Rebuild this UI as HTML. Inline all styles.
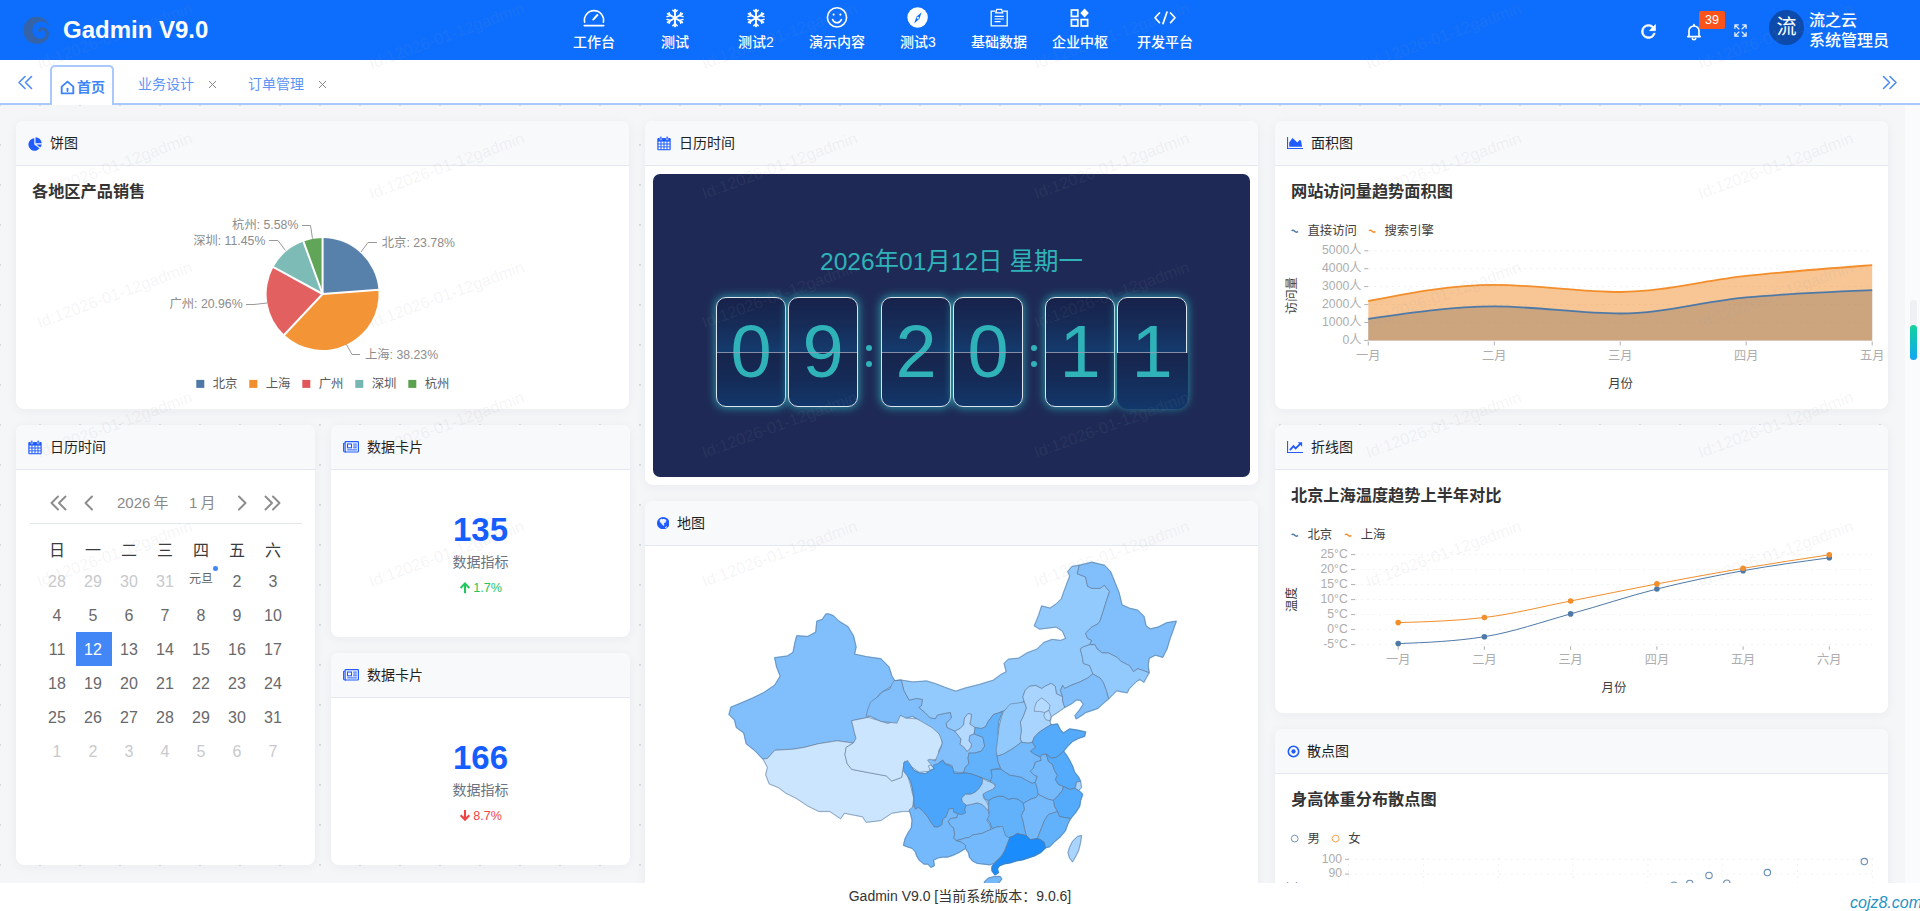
<!DOCTYPE html>
<html lang="zh-CN">
<head>
<meta charset="utf-8">
<title>Gadmin V9.0</title>
<style>
*{box-sizing:border-box;margin:0;padding:0}
html,body{width:1920px;height:911px;overflow:hidden}
body{font-family:"Liberation Sans","Noto Sans CJK SC",sans-serif;background:#f5f7fa;color:#303133;position:relative;font-size:14px}
.abs{position:absolute}
#hdr{position:absolute;left:0;top:0;width:1920px;height:60px;background:#0d6efd;color:#fff}
#logo{position:absolute;left:23px;top:17px;width:27px;height:27px}
#brand{position:absolute;left:63px;top:15px;font-size:24px;font-weight:700;line-height:30px;letter-spacing:0px;white-space:nowrap}
.nav{position:absolute;top:0;height:60px;text-align:center;font-size:14px;white-space:nowrap}
.nav svg{position:absolute;top:6px;left:50%;margin-left:-12px;width:24px;height:24px}
.nav span{position:absolute;top:32px;left:50%;transform:translateX(-50%);line-height:20px;font-weight:500}
#tabs{position:absolute;left:0;top:60px;width:1920px;height:45px;background:#fff;border-bottom:2px solid #a9c8fb}
.tab{position:absolute;top:0;height:44px;line-height:48px;font-size:14px;color:#5b95f7;white-space:nowrap}
#content{position:absolute;left:0;top:0;width:1905px;height:883px;background-color:#f5f6f8;background-image:radial-gradient(circle,#d9dce3 0.9px,rgba(217,220,227,0) 1.3px);background-size:40px 40px;background-position:20px 5px;overflow:hidden}
#rstrip{position:absolute;left:1905px;top:106px;width:15px;height:777px;background:#fafbfc}
.card{position:absolute;background:#fff;border-radius:8px;box-shadow:0 2px 12px rgba(20,30,50,.05);overflow:hidden}
.ch{position:absolute;left:0;top:0;right:0;height:45px;background:#f8f9fb;border-bottom:1px solid #e4e7ed;font-size:14px;color:#1f1f1f}
.ch svg{position:absolute;left:12px;top:15px;width:14px;height:14px}
.ch span{position:absolute;left:34px;top:12px;line-height:20px;white-space:nowrap}
.ct{position:absolute;left:16px;top:58.500px;font-size:16.200px;font-weight:700;color:#333;line-height:22px;white-space:nowrap}
#foot{position:absolute;left:0;top:883px;width:1920px;height:28px;background:#fff;text-align:center;font-size:14px;line-height:26px;color:#333}
svg text{font-family:"Liberation Sans","Noto Sans CJK SC",sans-serif}
#wmk{position:absolute;left:0;top:0;width:1920px;height:883px;overflow:hidden;pointer-events:none;z-index:50}
.wm{position:absolute;height:20px;line-height:20px;font-size:16.3px;color:rgba(150,150,162,.1);transform:rotate(-20.2deg);transform-origin:left bottom;white-space:nowrap}

.cc{width:36px;height:34px;line-height:34px;text-align:center;font-size:16px;white-space:nowrap}
.flip{position:absolute;width:70px;height:110px;border:1.400px solid #dfe5ec;border-radius:10px;background:linear-gradient(180deg,#17224a 0%,#162c58 25%,#143b6e 49.800%,#17244b 50%,#152b57 75%,#12376a 100%);box-shadow:0 0 9px 1px rgba(47,190,200,.7)}
.flip i{position:absolute;left:0;right:0;top:53.500px;height:1px;background:rgba(150,160,182,.85);z-index:3}
.flip b{position:absolute;left:0;right:0;top:0;height:108px;line-height:108px;text-align:center;font-size:74px;font-weight:400;color:#2fb3b8;font-family:"Liberation Sans",sans-serif;z-index:2}
.flip u{position:absolute;left:-1.400px;right:-2px;top:54.500px;bottom:-2.500px;background:linear-gradient(180deg,#17244b,#12376a);border-radius:0 0 11px 11px;z-index:1}
</style>
</head>
<body>
<div id="content">
<div class="card" style="left:16px;top:121px;width:613px;height:288px"><div class="ch"><svg viewBox="0 0 14 14" style="top:15.500px"><path fill="#1f5bff" d="M6.300 1.300A6.200 6.200 0 1 0 11.500 11.300L6.300 7.500z"/><path fill="#1f5bff" d="M7.500 0.200A6.300 6.300 0 0 1 13.700 6.300H7.500z"/><path fill="#1f5bff" d="M8.400 7.400h5.300a6.300 6.300 0 0 1-1.500 3.100z"/></svg><span style="left:34px">饼图</span></div><div class="ct">各地区产品销售</div><svg class="abs" style="left:0;top:0" width="613" height="288" viewBox="0 0 613 288"><path d="M306.6 173.0L306.60 117.00A56 56 0 0 1 362.44 168.71Z" fill="#4e79a7" fill-opacity="0.950"/><path d="M306.6 173.0L362.44 168.71A56 56 0 0 1 268.24 213.80Z" fill="#f28e2c" fill-opacity="0.950"/><path d="M306.6 173.0L268.24 213.80A56 56 0 0 1 257.48 146.11Z" fill="#e15759" fill-opacity="0.950"/><path d="M306.6 173.0L257.48 146.11A56 56 0 0 1 287.37 120.41Z" fill="#76b7b2" fill-opacity="0.950"/><path d="M306.6 173.0L287.37 120.41A56 56 0 0 1 306.60 117.00Z" fill="#59a14f" fill-opacity="0.950"/><path d="M306.6 173.0L306.60 116.44" stroke="#fff" stroke-width="2" stroke-linecap="round"/><path d="M306.6 173.0L362.99 168.67" stroke="#fff" stroke-width="2" stroke-linecap="round"/><path d="M306.6 173.0L267.86 214.21" stroke="#fff" stroke-width="2" stroke-linecap="round"/><path d="M306.6 173.0L256.98 145.85" stroke="#fff" stroke-width="2" stroke-linecap="round"/><path d="M306.6 173.0L287.17 119.88" stroke="#fff" stroke-width="2" stroke-linecap="round"/><g fill="none" stroke="#999" stroke-width="1"><path d="M345.0 131.0L352.0 121.5L361.0 121.5"/><path d="M330.5 223.5L336.0 233.5L344.0 233.5"/><path d="M251.0 182.0L238.0 183.5L230.0 183.5"/><path d="M269.5 129.5L262.0 119.5L253.0 119.5"/><path d="M296.5 117.5L294.5 104.5L286.0 104.5"/></g><g font-size="12.300" fill="#8c8c8c"><text x="365.8" y="125.99999999999999">北京: 23.78%</text><text x="349" y="237.60000000000002">上海: 38.23%</text><text x="226.6" y="187.3" text-anchor="end">广州: 20.96%</text><text x="249.39999999999998" y="123.60000000000001" text-anchor="end">深圳: 11.45%</text><text x="282.4" y="107.99999999999999" text-anchor="end">杭州: 5.58%</text></g><rect x="180.3" y="258.9" width="8" height="8" fill="#4e79a7"/><text x="196.7" y="267.2" font-size="12.400" fill="#595959">北京</text><rect x="233.3" y="258.9" width="8" height="8" fill="#f28e2c"/><text x="249.7" y="267.2" font-size="12.400" fill="#595959">上海</text><rect x="286.3" y="258.9" width="8" height="8" fill="#e15759"/><text x="302.7" y="267.2" font-size="12.400" fill="#595959">广州</text><rect x="339.3" y="258.9" width="8" height="8" fill="#76b7b2"/><text x="355.7" y="267.2" font-size="12.400" fill="#595959">深圳</text><rect x="392.3" y="258.9" width="8" height="8" fill="#59a14f"/><text x="408.7" y="267.2" font-size="12.400" fill="#595959">杭州</text></svg></div>
<div class="card" style="left:16px;top:425px;width:299px;height:440px"><div class="ch"><svg viewBox="0 0 14 14.500" style="top:15px;height:14.500px"><rect x="0.300" y="2" width="13.400" height="12.300" rx="1" fill="#1f5bff"/><rect x="2.900" y="0.200" width="1.900" height="3.700" rx="0.950" fill="#1f5bff" stroke="#f8f9fb" stroke-width="0.600"/><rect x="9.200" y="0.200" width="1.900" height="3.700" rx="0.950" fill="#1f5bff" stroke="#f8f9fb" stroke-width="0.600"/><g fill="#fff"><rect x="1.5" y="5.6" width="2" height="1.900"/><rect x="4.5" y="5.6" width="2" height="1.900"/><rect x="7.5" y="5.6" width="2" height="1.900"/><rect x="10.5" y="5.6" width="2" height="1.900"/><rect x="1.5" y="8.5" width="2" height="1.900"/><rect x="4.5" y="8.5" width="2" height="1.900"/><rect x="7.5" y="8.5" width="2" height="1.900"/><rect x="10.5" y="8.5" width="2" height="1.900"/><rect x="1.5" y="11.3" width="2" height="1.900"/><rect x="4.5" y="11.3" width="2" height="1.900"/><rect x="7.5" y="11.3" width="2" height="1.900"/><rect x="10.5" y="11.3" width="2" height="1.900"/></g></svg><span style="left:34px">日历时间</span></div><svg class="abs" style="left:34px;top:70px;width:18px;height:16px" viewBox="0 0 18 16" fill="none" stroke="#8c8c8c" stroke-width="1.900" stroke-linecap="round" stroke-linejoin="round"><path d="M8 1.500L1.500 8 8 14.500M15.500 1.500L9 8l6.500 6.500"/></svg><svg class="abs" style="left:68px;top:70px;width:10px;height:16px" viewBox="0 0 10 16" fill="none" stroke="#8c8c8c" stroke-width="1.900" stroke-linecap="round" stroke-linejoin="round"><path d="M8 1.500L1.500 8 8 14.500"/></svg><div class="abs" style="left:101px;top:66.800px;font-size:15px;line-height:22px;color:#8a8a8a;white-space:nowrap;word-spacing:-1px">2026 年</div><div class="abs" style="left:173px;top:66.800px;font-size:15px;line-height:22px;color:#8a8a8a;white-space:nowrap;word-spacing:-1px">1 月</div><svg class="abs" style="left:221px;top:70px;width:10px;height:16px" viewBox="0 0 10 16" fill="none" stroke="#8c8c8c" stroke-width="1.900" stroke-linecap="round" stroke-linejoin="round"><path d="M2 1.500L8.500 8 2 14.500"/></svg><svg class="abs" style="left:247px;top:70px;width:18px;height:16px" viewBox="0 0 18 16" fill="none" stroke="#8c8c8c" stroke-width="1.900" stroke-linecap="round" stroke-linejoin="round"><path d="M2.500 1.500L9 8l-6.500 6.500M10 1.500L16.500 8 10 14.500"/></svg><div class="abs" style="left:14px;top:97.500px;width:272px;height:1px;background:#e4e7ed"></div><div class="abs cc" style="left:23px;top:109px;color:#3c3c3e">日</div><div class="abs cc" style="left:59px;top:109px;color:#3c3c3e">一</div><div class="abs cc" style="left:95px;top:109px;color:#3c3c3e">二</div><div class="abs cc" style="left:131px;top:109px;color:#3c3c3e">三</div><div class="abs cc" style="left:167px;top:109px;color:#3c3c3e">四</div><div class="abs cc" style="left:203px;top:109px;color:#3c3c3e">五</div><div class="abs cc" style="left:239px;top:109px;color:#3c3c3e">六</div><div class="abs cc" style="left:23px;top:140.0px;color:#c8c9cd">28</div><div class="abs cc" style="left:59px;top:140.0px;color:#c8c9cd">29</div><div class="abs cc" style="left:95px;top:140.0px;color:#c8c9cd">30</div><div class="abs cc" style="left:131px;top:140.0px;color:#c8c9cd">31</div><div class="abs cc" style="left:167px;top:137.0px;color:#606266;font-size:12px">元旦</div><div class="abs" style="left:197.4px;top:141.0px;width:4.500px;height:4.500px;border-radius:50%;background:#4287f5"></div><div class="abs cc" style="left:203px;top:140.0px;color:#69696c">2</div><div class="abs cc" style="left:239px;top:140.0px;color:#69696c">3</div><div class="abs cc" style="left:23px;top:174.0px;color:#69696c">4</div><div class="abs cc" style="left:59px;top:174.0px;color:#69696c">5</div><div class="abs cc" style="left:95px;top:174.0px;color:#69696c">6</div><div class="abs cc" style="left:131px;top:174.0px;color:#69696c">7</div><div class="abs cc" style="left:167px;top:174.0px;color:#69696c">8</div><div class="abs cc" style="left:203px;top:174.0px;color:#69696c">9</div><div class="abs cc" style="left:239px;top:174.0px;color:#69696c">10</div><div class="abs cc" style="left:23px;top:208.1px;color:#69696c">11</div><div class="abs" style="left:60px;top:207.1px;width:36px;height:34px;background:#4287f5"></div><div class="abs cc" style="left:59px;top:208.1px;color:#fff">12</div><div class="abs cc" style="left:95px;top:208.1px;color:#69696c">13</div><div class="abs cc" style="left:131px;top:208.1px;color:#69696c">14</div><div class="abs cc" style="left:167px;top:208.1px;color:#69696c">15</div><div class="abs cc" style="left:203px;top:208.1px;color:#69696c">16</div><div class="abs cc" style="left:239px;top:208.1px;color:#69696c">17</div><div class="abs cc" style="left:23px;top:242.1px;color:#69696c">18</div><div class="abs cc" style="left:59px;top:242.1px;color:#69696c">19</div><div class="abs cc" style="left:95px;top:242.1px;color:#69696c">20</div><div class="abs cc" style="left:131px;top:242.1px;color:#69696c">21</div><div class="abs cc" style="left:167px;top:242.1px;color:#69696c">22</div><div class="abs cc" style="left:203px;top:242.1px;color:#69696c">23</div><div class="abs cc" style="left:239px;top:242.1px;color:#69696c">24</div><div class="abs cc" style="left:23px;top:276.2px;color:#69696c">25</div><div class="abs cc" style="left:59px;top:276.2px;color:#69696c">26</div><div class="abs cc" style="left:95px;top:276.2px;color:#69696c">27</div><div class="abs cc" style="left:131px;top:276.2px;color:#69696c">28</div><div class="abs cc" style="left:167px;top:276.2px;color:#69696c">29</div><div class="abs cc" style="left:203px;top:276.2px;color:#69696c">30</div><div class="abs cc" style="left:239px;top:276.2px;color:#69696c">31</div><div class="abs cc" style="left:23px;top:310.2px;color:#c8c9cd">1</div><div class="abs cc" style="left:59px;top:310.2px;color:#c8c9cd">2</div><div class="abs cc" style="left:95px;top:310.2px;color:#c8c9cd">3</div><div class="abs cc" style="left:131px;top:310.2px;color:#c8c9cd">4</div><div class="abs cc" style="left:167px;top:310.2px;color:#c8c9cd">5</div><div class="abs cc" style="left:203px;top:310.2px;color:#c8c9cd">6</div><div class="abs cc" style="left:239px;top:310.2px;color:#c8c9cd">7</div></div>
<div class="card" style="left:331px;top:425px;width:299px;height:212px"><div class="ch"><svg viewBox="0 0 16 12" style="width:16px;height:12px;top:16px" fill="none" stroke="#1f5bff"><rect x="2.100" y="0.600" width="13.300" height="10.400" rx="0.800" stroke-width="1.200"/><path d="M2.100 2.200H1.200a.6.600 0 0 0-.6.600v7a1.200 1.200 0 0 0 1.200 1.200H3" stroke-width="1.100"/><rect x="4.500" y="3" width="4" height="3.800" stroke-width="1.100"/><path stroke-width="1" d="M10.200 3.100h3.600M10.200 5h3.600M10.200 6.800h3.600M4.200 8.900h9.600"/></svg><span style="left:36px">数据卡片</span></div><div class="abs" style="left:0;width:299px;top:79.9px;text-align:center;font-size:33px;line-height:50px;font-weight:700;color:#165dff">135</div><div class="abs" style="left:0;width:299px;top:127.3px;text-align:center;font-size:14px;line-height:20px;color:#6b7280">数据指标</div><div class="abs" style="left:0;width:299px;top:152.5px;text-align:center;font-size:12.600px;line-height:20px;color:#22c55e"><svg viewBox="0 0 10 11" style="width:12px;height:13px;vertical-align:-2.500px;margin-right:2px"><path d="M5 0.800L0.700 5.200 1.900 6.500 4.100 4.300V10.300H5.900V4.300L8.100 6.500 9.300 5.200z" fill="#22c55e"/></svg>1.7%</div></div>
<div class="card" style="left:331px;top:653px;width:299px;height:212px"><div class="ch"><svg viewBox="0 0 16 12" style="width:16px;height:12px;top:16px" fill="none" stroke="#1f5bff"><rect x="2.100" y="0.600" width="13.300" height="10.400" rx="0.800" stroke-width="1.200"/><path d="M2.100 2.200H1.200a.6.600 0 0 0-.6.600v7a1.200 1.200 0 0 0 1.200 1.200H3" stroke-width="1.100"/><rect x="4.500" y="3" width="4" height="3.800" stroke-width="1.100"/><path stroke-width="1" d="M10.200 3.100h3.600M10.200 5h3.600M10.200 6.800h3.600M4.200 8.900h9.600"/></svg><span style="left:36px">数据卡片</span></div><div class="abs" style="left:0;width:299px;top:79.9px;text-align:center;font-size:33px;line-height:50px;font-weight:700;color:#165dff">166</div><div class="abs" style="left:0;width:299px;top:127.3px;text-align:center;font-size:14px;line-height:20px;color:#6b7280">数据指标</div><div class="abs" style="left:0;width:299px;top:152.5px;text-align:center;font-size:12.600px;line-height:20px;color:#ef4444"><svg viewBox="0 0 10 11" style="width:12px;height:13px;vertical-align:-2.500px;margin-right:2px"><path d="M5 10.300L0.700 5.900 1.900 4.600 4.100 6.800V0.800H5.900V6.800L8.100 4.600 9.300 5.900z" fill="#ef4444"/></svg>8.7%</div></div>
<div class="card" style="left:645px;top:121px;width:613px;height:364px"><div class="ch"><svg viewBox="0 0 14 14.500" style="top:15px;height:14.500px"><rect x="0.300" y="2" width="13.400" height="12.300" rx="1" fill="#1f5bff"/><rect x="2.900" y="0.200" width="1.900" height="3.700" rx="0.950" fill="#1f5bff" stroke="#f8f9fb" stroke-width="0.600"/><rect x="9.200" y="0.200" width="1.900" height="3.700" rx="0.950" fill="#1f5bff" stroke="#f8f9fb" stroke-width="0.600"/><g fill="#fff"><rect x="1.5" y="5.6" width="2" height="1.900"/><rect x="4.5" y="5.6" width="2" height="1.900"/><rect x="7.5" y="5.6" width="2" height="1.900"/><rect x="10.5" y="5.6" width="2" height="1.900"/><rect x="1.5" y="8.5" width="2" height="1.900"/><rect x="4.5" y="8.5" width="2" height="1.900"/><rect x="7.5" y="8.5" width="2" height="1.900"/><rect x="10.5" y="8.5" width="2" height="1.900"/><rect x="1.5" y="11.3" width="2" height="1.900"/><rect x="4.5" y="11.3" width="2" height="1.900"/><rect x="7.5" y="11.3" width="2" height="1.900"/><rect x="10.5" y="11.3" width="2" height="1.900"/></g></svg><span style="left:34px">日历时间</span></div><div class="abs" style="left:8px;top:53px;width:597px;height:303px;border-radius:7px;background:#1e2a55"></div><div class="abs" style="left:8px;width:597px;top:123.9px;text-align:center;font-size:24.500px;line-height:34px;color:#2fb3b8;white-space:nowrap">2026年01月12日 星期一</div><div class="flip" style="left:71px;top:176px"><i></i><b>0</b></div><div class="flip" style="left:143px;top:176px"><i></i><b>9</b></div><div class="flip" style="left:236px;top:176px"><i></i><b>2</b></div><div class="flip" style="left:308px;top:176px"><i></i><b>0</b></div><div class="flip" style="left:400px;top:176px"><i></i><b>1</b></div><div class="flip" style="left:472px;top:176px"><i></i><u></u><b>1</b></div><div class="abs" style="left:221.4px;top:224px;width:6px;height:6px;border-radius:50%;background:#2fb3b8"></div><div class="abs" style="left:221.4px;top:239.8px;width:6px;height:6px;border-radius:50%;background:#2fb3b8"></div><div class="abs" style="left:385.7px;top:224px;width:6px;height:6px;border-radius:50%;background:#2fb3b8"></div><div class="abs" style="left:385.7px;top:239.8px;width:6px;height:6px;border-radius:50%;background:#2fb3b8"></div></div>
<div class="card" style="left:645px;top:501px;width:613px;height:400px"><div class="ch"><svg viewBox="0 0 12 12" style="left:12px;top:16px;width:12.400px;height:12.400px"><circle cx="6" cy="6" r="6" fill="#1f5bff"/><path fill="#fff" d="M2.500 2.900L4.200 1.700 5.300 2.300 6.600 1.600 8.700 2.700 9.200 4.100 8.200 4.500 8.500 5.500 7.400 5.500 6.700 6.600 7.200 7.700 6.200 8.700 5.400 7.400 4.500 7.100 4 5.800 2.900 5.100zM7.600 9.900L9.200 9l.5.700L8.300 10.800z" fill-opacity=".92"/></svg><span style="left:32px">地图</span></div><svg class="abs" style="left:0;top:45px" width="613" height="340" viewBox="645 546 613 340"><g stroke="#65778f" stroke-width="0.600" stroke-linejoin="round"><path d="M926.7 758.3L936.4 760.1L935.5 769.2L928.8 770.3Z" fill="#cbe5ff" stroke="#cbe5ff" stroke-width="1.6"/>
<path d="M983.8 797.0L990.0 797.0L990.8 805.8L985.6 804.9Z" fill="#62b1fb" stroke="#62b1fb" stroke-width="1.6"/>
<path d="M894.2 680.7L901.3 680.2L912.7 682.0L926.7 681.1L935.5 683.7L944.3 687.2L955.7 691.3L965.4 688.1L979.4 684.6L993.5 680.2L1000.5 674.9L1006.3 671.8L1004.2 663.5L1008.3 659.3L1018.8 658.2L1027.1 653.0L1037.5 648.9L1043.8 642.6L1052.1 639.5L1060.5 640.5L1065.7 638.4L1062.6 631.1L1056.3 627.0L1048.0 628.0L1039.6 629.0L1034.4 625.9L1038.6 615.5L1041.7 606.1L1050.1 608.2L1056.3 604.0L1061.5 598.8L1063.6 592.5L1066.7 584.2L1069.9 575.9L1067.8 571.7L1072.0 566.5L1079.3 565.4L1077.2 573.8L1085.5 576.9L1087.6 586.3L1091.8 588.4L1100.1 588.4L1104.3 585.2L1109.5 591.5L1106.4 600.9L1103.2 611.3L1100.1 620.7L1098.0 623.8L1091.8 627.0L1085.5 633.2L1087.6 638.4L1091.8 640.5L1089.7 644.7L1083.4 646.8L1080.3 648.9L1082.4 657.2L1083.4 663.5L1089.7 665.5L1092.8 673.9L1087.6 678.1L1079.3 682.2L1070.9 685.4L1064.7 688.5L1062.6 685.4L1060.5 690.6L1062.6 696.8L1056.3 693.7L1055.3 686.4L1051.1 683.3L1044.8 686.4L1041.7 688.5L1035.5 685.4L1029.2 686.4L1025.0 690.6L1022.9 696.8L1024.0 701.0L1018.8 705.2L1010.4 707.3L1004.2 710.4L1000.0 712.5L1002.3 711.8L993.5 714.4L988.2 721.5L985.6 726.7L981.2 728.5L975.0 727.6L969.8 724.1L970.6 720.6L971.5 714.4L968.0 713.6L964.5 718.0L963.6 725.0L960.1 728.5L954.8 731.1L946.9 727.6L946.1 723.2L951.3 718.0L950.4 712.7L944.3 713.6L937.3 715.3L935.5 718.8L930.2 718.0L925.0 712.7L918.8 707.4L921.5 705.7L922.3 699.5L916.2 698.6L909.2 700.4L903.9 690.7L901.3 680.2Z" fill="#93cafd" stroke="#93cafd" stroke-width="1.6"/>
<path d="M1022.9 696.8L1025.0 690.6L1029.2 686.4L1035.5 685.4L1041.7 688.5L1044.8 686.4L1051.1 683.3L1055.3 686.4L1056.3 693.7L1062.6 696.8L1062.6 701.0L1064.7 707.3L1060.5 710.4L1054.2 714.6L1051.1 716.6L1050.1 721.9L1051.1 725.0L1050.4 725.1L1045.4 728.1L1039.3 732.1L1034.3 737.2L1032.3 742.2L1028.3 743.2L1021.3 742.2L1020.3 738.2L1021.3 730.1L1020.3 722.1L1023.3 716.1L1026.3 708.0L1024.3 702.0Z" fill="#a9d4fe" stroke="#a9d4fe" stroke-width="1.6"/>
<path d="M828.6 614.0L833.3 615.8L838.8 621.3L847.9 626.8L853.4 635.9L856.0 646.9L854.5 654.2L866.2 656.7L880.8 658.9L888.9 667.0L891.8 676.1L894.7 680.9L891.8 686.0L880.8 692.6L873.5 701.7L869.1 714.5L868.0 717.4L851.6 720.7L854.5 732.8L856.0 738.3L853.4 743.0L837.0 740.8L818.7 743.7L804.1 747.4L793.1 749.2L774.8 750.3L767.5 758.4L763.1 759.1L754.7 750.3L746.3 743.7L743.8 732.8L736.4 727.3L734.6 720.0L729.1 714.5L731.0 707.2L740.1 703.5L752.9 698.0L763.9 692.6L774.8 685.2L780.3 676.1L776.7 667.0L774.8 657.8L787.6 656.0L793.1 652.4L794.9 643.2L796.8 635.9L807.7 636.6L815.8 632.2L816.9 621.3L822.4 619.5L826.0 614.0Z" fill="#80bffc" stroke="#80bffc" stroke-width="1.6"/>
<path d="M763.1 759.1L767.5 758.4L774.8 750.3L793.1 749.2L804.1 747.4L818.7 743.7L837.0 740.8L853.4 743.0L846.1 747.4L845.0 754.7L847.2 763.8L851.6 769.3L866.2 772.2L886.3 775.9L891.8 781.0L901.7 777.4L902.8 769.3L904.6 765.7L910.1 783.9L913.7 798.6L912.6 807.7L910.1 811.4L902.8 811.4L891.8 813.2L880.8 820.5L866.2 822.3L862.6 816.8L844.3 813.2L840.6 818.7L829.7 811.4L818.7 811.4L807.7 805.9L796.8 798.6L785.8 793.1L778.5 787.6L769.3 783.9L765.7 774.8L767.5 767.5Z" fill="#cbe5ff" stroke="#cbe5ff" stroke-width="1.6"/>
<path d="M851.6 720.7L868.0 717.4L877.2 720.0L888.1 723.6L895.5 720.0L900.9 715.2L906.4 718.1L917.4 718.9L924.7 721.8L935.7 729.1L941.1 736.4L942.2 743.7L938.6 751.0L939.3 758.4L932.0 760.2L935.7 763.8L928.4 765.7L930.2 771.1L919.2 772.2L910.1 765.7L904.6 761.3L902.8 769.3L901.7 777.4L891.8 781.0L886.3 775.9L866.2 772.2L851.6 769.3L847.2 763.8L845.0 754.7L846.1 747.4L853.4 743.0L856.0 738.3L854.5 732.8Z" fill="#cbe5ff" stroke="#cbe5ff" stroke-width="1.6"/>
<path d="M894.2 680.7L901.3 680.2L903.9 690.7L909.2 700.4L916.2 698.6L922.3 699.5L921.5 705.7L918.8 707.4L925.0 712.7L930.2 718.0L935.5 718.8L937.3 715.3L944.3 713.6L950.4 712.7L951.3 718.0L946.1 723.2L946.9 727.6L954.8 731.1L958.3 735.5L961.0 739.0L960.1 744.3L963.6 746.9L967.1 751.3L970.6 747.8L971.5 744.3L968.9 740.8L969.8 735.5L974.2 733.8L982.9 737.3L984.7 746.1L981.2 751.3L974.2 753.1L968.9 753.1L968.0 758.3L968.9 763.6L965.4 767.1L963.6 772.4L958.3 772.4L953.1 771.5L952.2 765.4L946.1 763.6L942.5 760.1L939.0 762.7L937.3 767.1L933.8 768.0L930.2 763.6L927.6 760.1L930.2 759.2L935.5 761.0L937.3 755.7L940.8 747.8L942.5 742.5L939.0 733.8L932.0 727.6L921.5 721.5L912.7 716.2L905.7 718.0L900.4 715.3L896.9 723.2L889.9 722.3L881.1 721.5L870.5 716.2L866.1 716.2L867.9 709.2L870.5 702.1L877.6 696.9L882.8 691.6L889.9 689.0L892.5 682.8Z" fill="#80bffc" stroke="#80bffc" stroke-width="1.6"/>
<path d="M954.8 731.1L960.1 728.5L963.6 725.0L964.5 718.0L968.0 713.6L971.5 714.4L970.6 720.6L969.8 724.1L975.0 727.6L974.2 733.8L969.8 735.5L968.9 740.8L971.5 744.3L970.6 747.8L967.1 751.3L963.6 746.9L960.1 744.3L961.0 739.0L958.3 735.5Z" fill="#b5daff" stroke="#b5daff" stroke-width="1.6"/>
<path d="M1002.3 711.8L993.5 714.4L988.2 721.5L985.6 726.7L981.2 728.5L975.0 727.6L974.2 733.8L982.9 737.3L984.7 746.1L981.2 751.3L974.2 753.1L968.9 753.1L968.0 758.3L968.9 763.6L965.4 767.1L963.6 772.4L972.4 774.2L982.9 778.0L990.8 781.2L992.6 775.9L990.8 769.8L1000.5 768.0L998.7 763.6L997.0 755.7L997.9 747.8L998.7 739.0L997.9 730.2L998.7 721.5Z" fill="#62b1fb" stroke="#62b1fb" stroke-width="1.6"/>
<path d="M1079.3 565.4L1091.8 562.3L1104.3 565.4L1110.5 571.7L1114.7 582.1L1118.9 592.5L1122.0 605.1L1129.3 608.2L1137.7 610.3L1143.9 616.5L1146.0 625.9L1150.2 629.0L1158.5 627.0L1166.9 622.8L1176.2 621.3L1173.1 630.1L1170.0 638.4L1166.9 648.9L1162.7 657.2L1155.4 655.1L1149.1 658.2L1148.1 665.5L1149.1 672.8L1143.9 670.8L1137.7 668.7L1133.5 671.8L1129.3 665.5L1125.1 663.5L1121.0 661.4L1116.8 657.2L1108.5 653.0L1102.2 653.0L1097.0 648.9L1094.9 644.7L1089.7 644.7L1091.8 640.5L1087.6 638.4L1085.5 633.2L1091.8 627.0L1098.0 623.8L1100.1 620.7L1103.2 611.3L1106.4 600.9L1109.5 591.5L1104.3 585.2L1100.1 588.4L1091.8 588.4L1087.6 586.3L1085.5 576.9L1077.2 573.8Z" fill="#80bffc" stroke="#80bffc" stroke-width="1.6"/>
<path d="M1080.3 648.9L1083.4 646.8L1089.7 644.7L1094.9 644.7L1097.0 648.9L1102.2 653.0L1108.5 653.0L1116.8 657.2L1121.0 661.4L1125.1 663.5L1129.3 665.5L1133.5 671.8L1137.7 668.7L1143.9 670.8L1149.1 672.8L1146.0 678.1L1143.9 682.2L1139.7 679.1L1135.6 682.2L1129.3 688.5L1127.2 692.7L1121.0 691.6L1116.8 690.6L1112.6 694.7L1108.5 698.9L1106.4 690.6L1103.2 682.2L1100.1 678.1L1092.8 673.9L1089.7 665.5L1083.4 663.5L1082.4 657.2Z" fill="#93cafd" stroke="#93cafd" stroke-width="1.6"/>
<path d="M1092.8 673.9L1100.1 678.1L1103.2 682.2L1106.4 690.6L1108.5 698.9L1102.2 704.1L1098.0 708.3L1091.8 710.4L1085.5 712.5L1081.3 715.6L1076.1 718.7L1075.1 715.6L1079.3 710.4L1083.4 704.1L1080.3 700.0L1076.1 700.0L1070.9 704.1L1064.7 707.3L1062.6 701.0L1062.6 696.8L1060.5 690.6L1062.6 685.4L1064.7 688.5L1070.9 685.4L1079.3 682.2L1087.6 678.1Z" fill="#80bffc" stroke="#80bffc" stroke-width="1.6"/>
<path d="M1034.4 708.3L1036.5 702.0L1041.7 697.9L1045.9 701.0L1050.1 705.2L1049.0 710.4L1044.8 712.5L1039.6 711.4L1034.4 711.4Z" fill="#b5daff" stroke="#b5daff" stroke-width="1.6"/>
<path d="M1044.8 712.5L1049.0 710.4L1051.1 716.6L1050.1 720.8L1045.9 719.8L1043.8 715.6Z" fill="#b5daff" stroke="#b5daff" stroke-width="1.6"/>
<path d="M1024.3 702.0L1018.2 703.0L1010.2 704.0L1003.2 712.1L1001.2 718.1L999.2 726.1L998.2 734.1L997.2 742.2L996.2 750.2L997.2 756.2L1003.2 754.2L1010.2 750.2L1016.2 746.2L1021.3 742.2L1020.3 738.2L1021.3 730.1L1020.3 722.1L1023.3 716.1L1026.3 708.0Z" fill="#93cafd" stroke="#93cafd" stroke-width="1.6"/>
<path d="M1032.3 742.2L1034.3 737.2L1039.3 732.1L1045.4 728.1L1050.4 725.1L1057.4 724.1L1060.4 730.1L1063.4 733.1L1069.5 729.1L1076.5 730.1L1085.5 732.1L1084.5 736.2L1078.5 738.2L1072.5 741.2L1067.5 746.2L1063.4 751.2L1060.4 754.2L1056.4 757.2L1051.4 758.2L1046.4 754.2L1042.3 754.2L1040.3 757.2L1034.3 754.2L1030.3 751.2L1035.3 747.2Z" fill="#54aafb" stroke="#54aafb" stroke-width="1.6"/>
<path d="M997.2 756.2L1003.2 754.2L1010.2 750.2L1016.2 746.2L1021.3 742.2L1028.3 743.2L1032.3 742.2L1035.3 747.2L1030.3 751.2L1034.3 754.2L1040.3 757.2L1041.3 760.3L1035.3 762.3L1033.3 768.3L1030.3 771.3L1034.3 775.3L1037.3 776.3L1035.3 782.3L1032.3 783.4L1026.3 780.3L1021.3 777.3L1016.2 776.3L1010.2 775.3L1005.2 772.3L1001.2 769.3L998.2 762.3Z" fill="#74b9fc" stroke="#74b9fc" stroke-width="1.6"/>
<path d="M991.1 770.3L995.1 769.3L1001.2 769.3L1005.2 772.3L1010.2 775.3L1016.2 776.3L1021.3 777.3L1026.3 780.3L1032.3 783.4L1035.3 782.3L1037.3 788.4L1038.3 794.4L1036.3 797.4L1030.3 799.4L1023.3 803.4L1018.2 799.4L1013.2 798.4L1008.2 799.4L1003.2 796.4L998.2 796.4L992.1 798.4L989.1 800.4L985.1 799.4L983.1 794.4L986.1 791.4L994.1 788.4L995.1 784.4L990.1 782.3L992.1 776.3Z" fill="#62b1fb" stroke="#62b1fb" stroke-width="1.6"/>
<path d="M1041.3 760.3L1035.3 762.3L1033.3 768.3L1030.3 771.3L1034.3 775.3L1037.3 776.3L1035.3 782.3L1037.3 788.4L1038.3 794.4L1042.3 796.4L1048.4 799.4L1053.4 800.4L1058.4 795.4L1062.4 790.4L1063.4 786.4L1058.4 784.4L1055.4 779.3L1057.4 775.3L1054.4 770.3L1052.4 764.3L1048.4 761.3L1046.4 754.6L1042.3 754.6L1040.3 757.2Z" fill="#74b9fc" stroke="#74b9fc" stroke-width="1.6"/>
<path d="M1051.4 758.2L1056.4 757.2L1060.4 754.2L1063.4 751.2L1066.4 755.2L1069.5 760.3L1072.5 766.3L1074.5 772.3L1078.5 777.3L1080.5 781.3L1076.5 782.3L1074.5 788.4L1069.5 789.4L1063.4 786.4L1058.4 784.4L1055.4 779.3L1057.4 775.3L1054.4 770.3L1052.4 764.3L1048.4 761.3L1046.4 754.2Z" fill="#54aafb" stroke="#54aafb" stroke-width="1.6"/>
<path d="M1076.5 782.3L1080.5 781.3L1081.5 787.4L1078.5 790.4L1075.5 788.4Z" fill="#a9d4fe" stroke="#a9d4fe" stroke-width="1.6"/>
<path d="M1063.4 786.4L1069.5 789.4L1074.5 788.4L1078.5 790.4L1082.5 794.4L1080.5 800.4L1079.5 806.4L1075.5 812.5L1070.5 818.5L1064.4 817.5L1059.4 816.5L1057.4 811.5L1054.4 806.4L1053.4 800.4L1058.4 795.4L1062.4 790.4Z" fill="#54aafb" stroke="#54aafb" stroke-width="1.6"/>
<path d="M1038.3 794.4L1042.3 796.4L1048.4 799.4L1053.4 800.4L1054.4 806.4L1057.4 811.5L1054.4 812.5L1048.4 814.5L1044.4 820.5L1041.3 828.5L1039.3 833.6L1037.3 838.6L1030.3 839.6L1026.3 835.6L1024.3 828.5L1023.3 822.5L1021.3 815.5L1024.3 809.5L1023.3 803.4L1030.3 799.4L1036.3 797.4Z" fill="#74b9fc" stroke="#74b9fc" stroke-width="1.6"/>
<path d="M989.1 800.4L992.1 798.4L998.2 796.4L1003.2 796.4L1008.2 799.4L1013.2 798.4L1018.2 799.4L1023.3 803.4L1024.3 809.5L1021.3 815.5L1023.3 822.5L1024.3 828.5L1026.3 835.6L1022.3 834.6L1017.2 833.6L1012.2 836.6L1008.2 837.6L1004.2 834.6L1003.2 828.5L998.2 826.5L992.1 828.5L990.1 822.5L987.1 818.5L989.1 812.5L988.1 806.4Z" fill="#62b1fb" stroke="#62b1fb" stroke-width="1.6"/>
<path d="M1057.4 811.5L1059.4 816.5L1064.4 817.5L1070.5 818.5L1067.5 824.5L1065.4 830.5L1060.4 836.6L1054.4 841.6L1049.4 846.6L1045.4 847.6L1044.4 842.6L1040.3 839.6L1037.3 838.6L1039.3 833.6L1041.3 828.5L1044.4 820.5L1048.4 814.5L1054.4 812.5Z" fill="#62b1fb" stroke="#62b1fb" stroke-width="1.6"/>
<path d="M1008.2 837.6L1012.2 836.6L1017.2 833.6L1022.3 834.6L1026.3 835.6L1030.3 839.6L1037.3 838.6L1040.3 839.6L1044.4 842.6L1045.4 847.6L1040.3 852.6L1034.3 855.7L1028.3 857.7L1022.3 859.7L1016.2 860.7L1010.2 862.7L1004.2 863.7L999.2 865.7L997.2 868.7L998.2 872.7L995.1 874.7L992.1 870.7L992.1 866.7L995.1 862.7L1000.2 857.7L1004.2 851.6L1007.2 844.6Z" fill="#1a8cfb" stroke="#1a8cfb" stroke-width="1.6"/>
<path d="M1069.5 847.6L1072.5 841.6L1077.5 836.6L1081.5 835.6L1080.5 842.6L1078.5 850.6L1075.5 856.7L1072.5 861.7L1069.5 857.7L1068.1 852.6Z" fill="#a9d4fe" stroke="#a9d4fe" stroke-width="1.6"/>
<path d="M903.6 762.8L907.5 760.4L910.6 765.1L913.8 770.6L919.3 773.0L925.5 773.8L930.2 770.6L934.2 769.0L933.4 765.1L938.1 763.6L942.8 760.4L945.2 764.3L949.9 765.9L953.0 768.3L953.8 773.0L958.5 773.8L964.8 773.0L971.1 773.8L977.3 776.1L982.8 778.5L982.1 784.0L978.9 788.7L975.8 791.8L971.1 794.2L965.6 794.2L961.6 798.1L962.4 802.0L966.4 805.2L964.8 809.1L965.6 813.0L961.6 814.6L957.7 813.8L953.8 812.2L953.0 808.3L949.1 809.1L947.5 813.0L945.9 816.9L942.8 819.3L942.0 824.8L938.1 827.1L934.2 827.1L931.0 822.4L927.1 816.2L922.4 810.7L918.5 807.5L915.3 809.1L913.8 804.4L913.8 796.5L912.2 787.1L910.6 780.8L906.7 775.3L903.6 771.4Z" fill="#4aa5fb" stroke="#4aa5fb" stroke-width="1.6"/>
<path d="M913.8 804.4L915.3 809.1L918.5 807.5L922.4 810.7L927.1 816.2L931.0 822.4L934.2 827.1L938.1 827.1L942.0 824.8L942.8 819.3L945.9 816.9L947.5 813.0L949.1 809.1L953.0 808.3L953.8 812.2L957.7 813.8L956.9 817.7L950.7 818.5L948.3 821.6L950.7 825.6L953.8 827.9L954.6 834.2L953.8 838.1L956.2 840.5L961.6 842.1L965.6 845.2L965.6 848.3L961.6 850.7L957.7 853.0L952.2 855.4L947.5 857.0L942.8 857.0L938.1 857.8L933.4 860.1L934.2 865.6L931.0 867.2L927.9 864.0L924.0 864.0L919.3 860.1L916.9 856.2L915.3 851.5L912.2 848.3L907.5 846.8L903.6 845.2L905.1 838.9L908.3 832.6L911.4 827.9L912.2 820.1L910.6 813.8L909.0 809.9L912.2 807.5Z" fill="#74b9fc" stroke="#74b9fc" stroke-width="1.6"/>
<path d="M950.7 818.5L956.9 817.7L957.7 813.8L961.6 814.6L965.6 813.0L964.8 809.1L966.4 805.2L971.1 804.4L977.3 802.8L982.1 804.4L985.2 807.5L988.3 810.7L989.1 815.4L986.8 820.1L989.9 824.8L990.7 829.5L986.8 831.1L982.1 833.4L977.3 834.2L972.6 835.0L969.5 837.3L964.8 838.1L960.1 839.7L956.2 840.5L953.8 838.1L954.6 834.2L953.8 827.9L950.7 825.6L948.3 821.6Z" fill="#74b9fc" stroke="#74b9fc" stroke-width="1.6"/>
<path d="M982.8 778.5L986.8 780.8L993.0 783.2L995.4 786.3L992.3 789.5L986.8 791.8L982.8 794.2L983.6 798.1L986.8 802.0L988.3 805.9L988.3 810.7L985.2 807.5L982.1 804.4L977.3 802.8L971.1 804.4L966.4 805.2L962.4 802.0L961.6 798.1L965.6 794.2L971.1 794.2L975.8 791.8L978.9 788.7L982.1 784.0Z" fill="#a9d4fe" stroke="#a9d4fe" stroke-width="1.6"/>
<path d="M956.2 840.5L960.1 839.7L964.8 838.1L969.5 837.3L972.6 835.0L977.3 834.2L982.1 833.4L986.8 831.1L990.7 829.5L996.2 827.1L1002.5 826.4L1004.0 831.1L1005.6 835.8L1009.5 838.1L1007.2 843.6L1004.8 849.9L1001.7 855.4L997.8 859.3L993.8 863.3L989.9 864.8L983.6 864.0L977.3 863.3L972.6 860.9L969.5 857.0L968.7 853.0L965.6 848.3L965.6 845.2L961.6 842.1Z" fill="#74b9fc" stroke="#74b9fc" stroke-width="1.6"/>
<path d="M984.4 882.1L988.3 878.2L994.6 876.6L1000.1 876.6L1001.7 879.0L999.3 882.1L996.2 885.2L989.9 886.0L985.2 884.4Z" fill="#74b9fc" stroke="#74b9fc" stroke-width="1.6"/>
<path d="M894.2 680.7L901.3 680.2L912.7 682.0L926.7 681.1L935.5 683.7L944.3 687.2L955.7 691.3L965.4 688.1L979.4 684.6L993.5 680.2L1000.5 674.9L1006.3 671.8L1004.2 663.5L1008.3 659.3L1018.8 658.2L1027.1 653.0L1037.5 648.9L1043.8 642.6L1052.1 639.5L1060.5 640.5L1065.7 638.4L1062.6 631.1L1056.3 627.0L1048.0 628.0L1039.6 629.0L1034.4 625.9L1038.6 615.5L1041.7 606.1L1050.1 608.2L1056.3 604.0L1061.5 598.8L1063.6 592.5L1066.7 584.2L1069.9 575.9L1067.8 571.7L1072.0 566.5L1079.3 565.4L1077.2 573.8L1085.5 576.9L1087.6 586.3L1091.8 588.4L1100.1 588.4L1104.3 585.2L1109.5 591.5L1106.4 600.9L1103.2 611.3L1100.1 620.7L1098.0 623.8L1091.8 627.0L1085.5 633.2L1087.6 638.4L1091.8 640.5L1089.7 644.7L1083.4 646.8L1080.3 648.9L1082.4 657.2L1083.4 663.5L1089.7 665.5L1092.8 673.9L1087.6 678.1L1079.3 682.2L1070.9 685.4L1064.7 688.5L1062.6 685.4L1060.5 690.6L1062.6 696.8L1056.3 693.7L1055.3 686.4L1051.1 683.3L1044.8 686.4L1041.7 688.5L1035.5 685.4L1029.2 686.4L1025.0 690.6L1022.9 696.8L1024.0 701.0L1018.8 705.2L1010.4 707.3L1004.2 710.4L1000.0 712.5L1002.3 711.8L993.5 714.4L988.2 721.5L985.6 726.7L981.2 728.5L975.0 727.6L969.8 724.1L970.6 720.6L971.5 714.4L968.0 713.6L964.5 718.0L963.6 725.0L960.1 728.5L954.8 731.1L946.9 727.6L946.1 723.2L951.3 718.0L950.4 712.7L944.3 713.6L937.3 715.3L935.5 718.8L930.2 718.0L925.0 712.7L918.8 707.4L921.5 705.7L922.3 699.5L916.2 698.6L909.2 700.4L903.9 690.7L901.3 680.2Z" fill="#93cafd"/>
<path d="M1022.9 696.8L1025.0 690.6L1029.2 686.4L1035.5 685.4L1041.7 688.5L1044.8 686.4L1051.1 683.3L1055.3 686.4L1056.3 693.7L1062.6 696.8L1062.6 701.0L1064.7 707.3L1060.5 710.4L1054.2 714.6L1051.1 716.6L1050.1 721.9L1051.1 725.0L1050.4 725.1L1045.4 728.1L1039.3 732.1L1034.3 737.2L1032.3 742.2L1028.3 743.2L1021.3 742.2L1020.3 738.2L1021.3 730.1L1020.3 722.1L1023.3 716.1L1026.3 708.0L1024.3 702.0Z" fill="#a9d4fe"/>
<path d="M828.6 614.0L833.3 615.8L838.8 621.3L847.9 626.8L853.4 635.9L856.0 646.9L854.5 654.2L866.2 656.7L880.8 658.9L888.9 667.0L891.8 676.1L894.7 680.9L891.8 686.0L880.8 692.6L873.5 701.7L869.1 714.5L868.0 717.4L851.6 720.7L854.5 732.8L856.0 738.3L853.4 743.0L837.0 740.8L818.7 743.7L804.1 747.4L793.1 749.2L774.8 750.3L767.5 758.4L763.1 759.1L754.7 750.3L746.3 743.7L743.8 732.8L736.4 727.3L734.6 720.0L729.1 714.5L731.0 707.2L740.1 703.5L752.9 698.0L763.9 692.6L774.8 685.2L780.3 676.1L776.7 667.0L774.8 657.8L787.6 656.0L793.1 652.4L794.9 643.2L796.8 635.9L807.7 636.6L815.8 632.2L816.9 621.3L822.4 619.5L826.0 614.0Z" fill="#80bffc"/>
<path d="M763.1 759.1L767.5 758.4L774.8 750.3L793.1 749.2L804.1 747.4L818.7 743.7L837.0 740.8L853.4 743.0L846.1 747.4L845.0 754.7L847.2 763.8L851.6 769.3L866.2 772.2L886.3 775.9L891.8 781.0L901.7 777.4L902.8 769.3L904.6 765.7L910.1 783.9L913.7 798.6L912.6 807.7L910.1 811.4L902.8 811.4L891.8 813.2L880.8 820.5L866.2 822.3L862.6 816.8L844.3 813.2L840.6 818.7L829.7 811.4L818.7 811.4L807.7 805.9L796.8 798.6L785.8 793.1L778.5 787.6L769.3 783.9L765.7 774.8L767.5 767.5Z" fill="#cbe5ff"/>
<path d="M851.6 720.7L868.0 717.4L877.2 720.0L888.1 723.6L895.5 720.0L900.9 715.2L906.4 718.1L917.4 718.9L924.7 721.8L935.7 729.1L941.1 736.4L942.2 743.7L938.6 751.0L939.3 758.4L932.0 760.2L935.7 763.8L928.4 765.7L930.2 771.1L919.2 772.2L910.1 765.7L904.6 761.3L902.8 769.3L901.7 777.4L891.8 781.0L886.3 775.9L866.2 772.2L851.6 769.3L847.2 763.8L845.0 754.7L846.1 747.4L853.4 743.0L856.0 738.3L854.5 732.8Z" fill="#cbe5ff"/>
<path d="M894.2 680.7L901.3 680.2L903.9 690.7L909.2 700.4L916.2 698.6L922.3 699.5L921.5 705.7L918.8 707.4L925.0 712.7L930.2 718.0L935.5 718.8L937.3 715.3L944.3 713.6L950.4 712.7L951.3 718.0L946.1 723.2L946.9 727.6L954.8 731.1L958.3 735.5L961.0 739.0L960.1 744.3L963.6 746.9L967.1 751.3L970.6 747.8L971.5 744.3L968.9 740.8L969.8 735.5L974.2 733.8L982.9 737.3L984.7 746.1L981.2 751.3L974.2 753.1L968.9 753.1L968.0 758.3L968.9 763.6L965.4 767.1L963.6 772.4L958.3 772.4L953.1 771.5L952.2 765.4L946.1 763.6L942.5 760.1L939.0 762.7L937.3 767.1L933.8 768.0L930.2 763.6L927.6 760.1L930.2 759.2L935.5 761.0L937.3 755.7L940.8 747.8L942.5 742.5L939.0 733.8L932.0 727.6L921.5 721.5L912.7 716.2L905.7 718.0L900.4 715.3L896.9 723.2L889.9 722.3L881.1 721.5L870.5 716.2L866.1 716.2L867.9 709.2L870.5 702.1L877.6 696.9L882.8 691.6L889.9 689.0L892.5 682.8Z" fill="#80bffc"/>
<path d="M954.8 731.1L960.1 728.5L963.6 725.0L964.5 718.0L968.0 713.6L971.5 714.4L970.6 720.6L969.8 724.1L975.0 727.6L974.2 733.8L969.8 735.5L968.9 740.8L971.5 744.3L970.6 747.8L967.1 751.3L963.6 746.9L960.1 744.3L961.0 739.0L958.3 735.5Z" fill="#b5daff"/>
<path d="M1002.3 711.8L993.5 714.4L988.2 721.5L985.6 726.7L981.2 728.5L975.0 727.6L974.2 733.8L982.9 737.3L984.7 746.1L981.2 751.3L974.2 753.1L968.9 753.1L968.0 758.3L968.9 763.6L965.4 767.1L963.6 772.4L972.4 774.2L982.9 778.0L990.8 781.2L992.6 775.9L990.8 769.8L1000.5 768.0L998.7 763.6L997.0 755.7L997.9 747.8L998.7 739.0L997.9 730.2L998.7 721.5Z" fill="#62b1fb"/>
<path d="M1079.3 565.4L1091.8 562.3L1104.3 565.4L1110.5 571.7L1114.7 582.1L1118.9 592.5L1122.0 605.1L1129.3 608.2L1137.7 610.3L1143.9 616.5L1146.0 625.9L1150.2 629.0L1158.5 627.0L1166.9 622.8L1176.2 621.3L1173.1 630.1L1170.0 638.4L1166.9 648.9L1162.7 657.2L1155.4 655.1L1149.1 658.2L1148.1 665.5L1149.1 672.8L1143.9 670.8L1137.7 668.7L1133.5 671.8L1129.3 665.5L1125.1 663.5L1121.0 661.4L1116.8 657.2L1108.5 653.0L1102.2 653.0L1097.0 648.9L1094.9 644.7L1089.7 644.7L1091.8 640.5L1087.6 638.4L1085.5 633.2L1091.8 627.0L1098.0 623.8L1100.1 620.7L1103.2 611.3L1106.4 600.9L1109.5 591.5L1104.3 585.2L1100.1 588.4L1091.8 588.4L1087.6 586.3L1085.5 576.9L1077.2 573.8Z" fill="#80bffc"/>
<path d="M1080.3 648.9L1083.4 646.8L1089.7 644.7L1094.9 644.7L1097.0 648.9L1102.2 653.0L1108.5 653.0L1116.8 657.2L1121.0 661.4L1125.1 663.5L1129.3 665.5L1133.5 671.8L1137.7 668.7L1143.9 670.8L1149.1 672.8L1146.0 678.1L1143.9 682.2L1139.7 679.1L1135.6 682.2L1129.3 688.5L1127.2 692.7L1121.0 691.6L1116.8 690.6L1112.6 694.7L1108.5 698.9L1106.4 690.6L1103.2 682.2L1100.1 678.1L1092.8 673.9L1089.7 665.5L1083.4 663.5L1082.4 657.2Z" fill="#93cafd"/>
<path d="M1092.8 673.9L1100.1 678.1L1103.2 682.2L1106.4 690.6L1108.5 698.9L1102.2 704.1L1098.0 708.3L1091.8 710.4L1085.5 712.5L1081.3 715.6L1076.1 718.7L1075.1 715.6L1079.3 710.4L1083.4 704.1L1080.3 700.0L1076.1 700.0L1070.9 704.1L1064.7 707.3L1062.6 701.0L1062.6 696.8L1060.5 690.6L1062.6 685.4L1064.7 688.5L1070.9 685.4L1079.3 682.2L1087.6 678.1Z" fill="#80bffc"/>
<path d="M1034.4 708.3L1036.5 702.0L1041.7 697.9L1045.9 701.0L1050.1 705.2L1049.0 710.4L1044.8 712.5L1039.6 711.4L1034.4 711.4Z" fill="#b5daff"/>
<path d="M1044.8 712.5L1049.0 710.4L1051.1 716.6L1050.1 720.8L1045.9 719.8L1043.8 715.6Z" fill="#b5daff"/>
<path d="M1024.3 702.0L1018.2 703.0L1010.2 704.0L1003.2 712.1L1001.2 718.1L999.2 726.1L998.2 734.1L997.2 742.2L996.2 750.2L997.2 756.2L1003.2 754.2L1010.2 750.2L1016.2 746.2L1021.3 742.2L1020.3 738.2L1021.3 730.1L1020.3 722.1L1023.3 716.1L1026.3 708.0Z" fill="#93cafd"/>
<path d="M1032.3 742.2L1034.3 737.2L1039.3 732.1L1045.4 728.1L1050.4 725.1L1057.4 724.1L1060.4 730.1L1063.4 733.1L1069.5 729.1L1076.5 730.1L1085.5 732.1L1084.5 736.2L1078.5 738.2L1072.5 741.2L1067.5 746.2L1063.4 751.2L1060.4 754.2L1056.4 757.2L1051.4 758.2L1046.4 754.2L1042.3 754.2L1040.3 757.2L1034.3 754.2L1030.3 751.2L1035.3 747.2Z" fill="#54aafb"/>
<path d="M997.2 756.2L1003.2 754.2L1010.2 750.2L1016.2 746.2L1021.3 742.2L1028.3 743.2L1032.3 742.2L1035.3 747.2L1030.3 751.2L1034.3 754.2L1040.3 757.2L1041.3 760.3L1035.3 762.3L1033.3 768.3L1030.3 771.3L1034.3 775.3L1037.3 776.3L1035.3 782.3L1032.3 783.4L1026.3 780.3L1021.3 777.3L1016.2 776.3L1010.2 775.3L1005.2 772.3L1001.2 769.3L998.2 762.3Z" fill="#74b9fc"/>
<path d="M991.1 770.3L995.1 769.3L1001.2 769.3L1005.2 772.3L1010.2 775.3L1016.2 776.3L1021.3 777.3L1026.3 780.3L1032.3 783.4L1035.3 782.3L1037.3 788.4L1038.3 794.4L1036.3 797.4L1030.3 799.4L1023.3 803.4L1018.2 799.4L1013.2 798.4L1008.2 799.4L1003.2 796.4L998.2 796.4L992.1 798.4L989.1 800.4L985.1 799.4L983.1 794.4L986.1 791.4L994.1 788.4L995.1 784.4L990.1 782.3L992.1 776.3Z" fill="#62b1fb"/>
<path d="M1041.3 760.3L1035.3 762.3L1033.3 768.3L1030.3 771.3L1034.3 775.3L1037.3 776.3L1035.3 782.3L1037.3 788.4L1038.3 794.4L1042.3 796.4L1048.4 799.4L1053.4 800.4L1058.4 795.4L1062.4 790.4L1063.4 786.4L1058.4 784.4L1055.4 779.3L1057.4 775.3L1054.4 770.3L1052.4 764.3L1048.4 761.3L1046.4 754.6L1042.3 754.6L1040.3 757.2Z" fill="#74b9fc"/>
<path d="M1051.4 758.2L1056.4 757.2L1060.4 754.2L1063.4 751.2L1066.4 755.2L1069.5 760.3L1072.5 766.3L1074.5 772.3L1078.5 777.3L1080.5 781.3L1076.5 782.3L1074.5 788.4L1069.5 789.4L1063.4 786.4L1058.4 784.4L1055.4 779.3L1057.4 775.3L1054.4 770.3L1052.4 764.3L1048.4 761.3L1046.4 754.2Z" fill="#54aafb"/>
<path d="M1076.5 782.3L1080.5 781.3L1081.5 787.4L1078.5 790.4L1075.5 788.4Z" fill="#a9d4fe"/>
<path d="M1063.4 786.4L1069.5 789.4L1074.5 788.4L1078.5 790.4L1082.5 794.4L1080.5 800.4L1079.5 806.4L1075.5 812.5L1070.5 818.5L1064.4 817.5L1059.4 816.5L1057.4 811.5L1054.4 806.4L1053.4 800.4L1058.4 795.4L1062.4 790.4Z" fill="#54aafb"/>
<path d="M1038.3 794.4L1042.3 796.4L1048.4 799.4L1053.4 800.4L1054.4 806.4L1057.4 811.5L1054.4 812.5L1048.4 814.5L1044.4 820.5L1041.3 828.5L1039.3 833.6L1037.3 838.6L1030.3 839.6L1026.3 835.6L1024.3 828.5L1023.3 822.5L1021.3 815.5L1024.3 809.5L1023.3 803.4L1030.3 799.4L1036.3 797.4Z" fill="#74b9fc"/>
<path d="M989.1 800.4L992.1 798.4L998.2 796.4L1003.2 796.4L1008.2 799.4L1013.2 798.4L1018.2 799.4L1023.3 803.4L1024.3 809.5L1021.3 815.5L1023.3 822.5L1024.3 828.5L1026.3 835.6L1022.3 834.6L1017.2 833.6L1012.2 836.6L1008.2 837.6L1004.2 834.6L1003.2 828.5L998.2 826.5L992.1 828.5L990.1 822.5L987.1 818.5L989.1 812.5L988.1 806.4Z" fill="#62b1fb"/>
<path d="M1057.4 811.5L1059.4 816.5L1064.4 817.5L1070.5 818.5L1067.5 824.5L1065.4 830.5L1060.4 836.6L1054.4 841.6L1049.4 846.6L1045.4 847.6L1044.4 842.6L1040.3 839.6L1037.3 838.6L1039.3 833.6L1041.3 828.5L1044.4 820.5L1048.4 814.5L1054.4 812.5Z" fill="#62b1fb"/>
<path d="M1008.2 837.6L1012.2 836.6L1017.2 833.6L1022.3 834.6L1026.3 835.6L1030.3 839.6L1037.3 838.6L1040.3 839.6L1044.4 842.6L1045.4 847.6L1040.3 852.6L1034.3 855.7L1028.3 857.7L1022.3 859.7L1016.2 860.7L1010.2 862.7L1004.2 863.7L999.2 865.7L997.2 868.7L998.2 872.7L995.1 874.7L992.1 870.7L992.1 866.7L995.1 862.7L1000.2 857.7L1004.2 851.6L1007.2 844.6Z" fill="#1a8cfb"/>
<path d="M1069.5 847.6L1072.5 841.6L1077.5 836.6L1081.5 835.6L1080.5 842.6L1078.5 850.6L1075.5 856.7L1072.5 861.7L1069.5 857.7L1068.1 852.6Z" fill="#a9d4fe"/>
<path d="M903.6 762.8L907.5 760.4L910.6 765.1L913.8 770.6L919.3 773.0L925.5 773.8L930.2 770.6L934.2 769.0L933.4 765.1L938.1 763.6L942.8 760.4L945.2 764.3L949.9 765.9L953.0 768.3L953.8 773.0L958.5 773.8L964.8 773.0L971.1 773.8L977.3 776.1L982.8 778.5L982.1 784.0L978.9 788.7L975.8 791.8L971.1 794.2L965.6 794.2L961.6 798.1L962.4 802.0L966.4 805.2L964.8 809.1L965.6 813.0L961.6 814.6L957.7 813.8L953.8 812.2L953.0 808.3L949.1 809.1L947.5 813.0L945.9 816.9L942.8 819.3L942.0 824.8L938.1 827.1L934.2 827.1L931.0 822.4L927.1 816.2L922.4 810.7L918.5 807.5L915.3 809.1L913.8 804.4L913.8 796.5L912.2 787.1L910.6 780.8L906.7 775.3L903.6 771.4Z" fill="#4aa5fb"/>
<path d="M913.8 804.4L915.3 809.1L918.5 807.5L922.4 810.7L927.1 816.2L931.0 822.4L934.2 827.1L938.1 827.1L942.0 824.8L942.8 819.3L945.9 816.9L947.5 813.0L949.1 809.1L953.0 808.3L953.8 812.2L957.7 813.8L956.9 817.7L950.7 818.5L948.3 821.6L950.7 825.6L953.8 827.9L954.6 834.2L953.8 838.1L956.2 840.5L961.6 842.1L965.6 845.2L965.6 848.3L961.6 850.7L957.7 853.0L952.2 855.4L947.5 857.0L942.8 857.0L938.1 857.8L933.4 860.1L934.2 865.6L931.0 867.2L927.9 864.0L924.0 864.0L919.3 860.1L916.9 856.2L915.3 851.5L912.2 848.3L907.5 846.8L903.6 845.2L905.1 838.9L908.3 832.6L911.4 827.9L912.2 820.1L910.6 813.8L909.0 809.9L912.2 807.5Z" fill="#74b9fc"/>
<path d="M950.7 818.5L956.9 817.7L957.7 813.8L961.6 814.6L965.6 813.0L964.8 809.1L966.4 805.2L971.1 804.4L977.3 802.8L982.1 804.4L985.2 807.5L988.3 810.7L989.1 815.4L986.8 820.1L989.9 824.8L990.7 829.5L986.8 831.1L982.1 833.4L977.3 834.2L972.6 835.0L969.5 837.3L964.8 838.1L960.1 839.7L956.2 840.5L953.8 838.1L954.6 834.2L953.8 827.9L950.7 825.6L948.3 821.6Z" fill="#74b9fc"/>
<path d="M982.8 778.5L986.8 780.8L993.0 783.2L995.4 786.3L992.3 789.5L986.8 791.8L982.8 794.2L983.6 798.1L986.8 802.0L988.3 805.9L988.3 810.7L985.2 807.5L982.1 804.4L977.3 802.8L971.1 804.4L966.4 805.2L962.4 802.0L961.6 798.1L965.6 794.2L971.1 794.2L975.8 791.8L978.9 788.7L982.1 784.0Z" fill="#a9d4fe"/>
<path d="M956.2 840.5L960.1 839.7L964.8 838.1L969.5 837.3L972.6 835.0L977.3 834.2L982.1 833.4L986.8 831.1L990.7 829.5L996.2 827.1L1002.5 826.4L1004.0 831.1L1005.6 835.8L1009.5 838.1L1007.2 843.6L1004.8 849.9L1001.7 855.4L997.8 859.3L993.8 863.3L989.9 864.8L983.6 864.0L977.3 863.3L972.6 860.9L969.5 857.0L968.7 853.0L965.6 848.3L965.6 845.2L961.6 842.1Z" fill="#74b9fc"/>
<path d="M984.4 882.1L988.3 878.2L994.6 876.6L1000.1 876.6L1001.7 879.0L999.3 882.1L996.2 885.2L989.9 886.0L985.2 884.4Z" fill="#74b9fc"/></g></svg></div>
<div class="card" style="left:1275px;top:121px;width:613px;height:288px"><div class="ch"><svg viewBox="0 0 16 12" style="width:16px;height:12px;top:16px"><path fill="none" stroke="#1f5bff" stroke-width="1.100" d="M0.550 0v11.450H16"/><path fill="#1f5bff" d="M2.200 9.700V5.500L5.500 1l4.900 4.500 2.100-2.400 1.500.5 1.100 6.100z"/></svg><span style="left:36px">面积图</span></div><div class="ct">网站访问量趋势面积图</div><svg class="abs" style="left:0;top:0" width="613" height="288" viewBox="1275 121 613 288"><path d="M1368.300 322.5H1872.200" stroke="#f0f0f0" stroke-width="1" stroke-dasharray="2 4"/><path d="M1368.300 304.6H1872.200" stroke="#f0f0f0" stroke-width="1" stroke-dasharray="2 4"/><path d="M1368.300 286.6H1872.200" stroke="#f0f0f0" stroke-width="1" stroke-dasharray="2 4"/><path d="M1368.300 268.7H1872.200" stroke="#f0f0f0" stroke-width="1" stroke-dasharray="2 4"/><path d="M1368.300 250.8H1872.200" stroke="#f0f0f0" stroke-width="1" stroke-dasharray="2 4"/><path d="M1368.3 318.9C1410.3 312.6 1452.3 306.4 1494.3 306.4C1536.3 306.4 1578.2 313.5 1620.2 313.5C1662.2 313.5 1704.2 301.3 1746.2 297.4C1788.2 293.5 1830.2 291.9 1872.2 290.2L1872.2 340.4L1368.3 340.4Z" fill="#4e79a7" fill-opacity="0.500"/><path d="M1368.3 301.0C1410.3 292.9 1452.3 284.8 1494.3 284.8C1536.3 284.8 1578.2 292.0 1620.2 292.0C1662.2 292.0 1704.2 280.4 1746.2 275.9C1788.2 271.4 1830.2 268.3 1872.2 265.1L1872.2 340.4L1368.3 340.4Z" fill="#f28e2c" fill-opacity="0.500"/><path d="M1368.3 318.9C1410.3 312.6 1452.3 306.4 1494.3 306.4C1536.3 306.4 1578.2 313.5 1620.2 313.5C1662.2 313.5 1704.2 301.3 1746.2 297.4C1788.2 293.5 1830.2 291.9 1872.2 290.2" fill="none" stroke="#4e79a7" stroke-width="1.800"/><path d="M1368.3 301.0C1410.3 292.9 1452.3 284.8 1494.3 284.8C1536.3 284.8 1578.2 292.0 1620.2 292.0C1662.2 292.0 1704.2 280.4 1746.2 275.9C1788.2 271.4 1830.2 268.3 1872.2 265.1" fill="none" stroke="#f28e2c" stroke-width="1.800"/><g font-size="12.200" fill="#adadad"><text x="1361.400" y="343.6" text-anchor="end">0人</text><path d="M1364.200 340.4h4" stroke="#b0b0b0" stroke-width="1"/><text x="1361.400" y="325.7" text-anchor="end">1000人</text><path d="M1364.200 322.5h4" stroke="#b0b0b0" stroke-width="1"/><text x="1361.400" y="307.8" text-anchor="end">2000人</text><path d="M1364.200 304.6h4" stroke="#b0b0b0" stroke-width="1"/><text x="1361.400" y="289.8" text-anchor="end">3000人</text><path d="M1364.200 286.6h4" stroke="#b0b0b0" stroke-width="1"/><text x="1361.400" y="271.9" text-anchor="end">4000人</text><path d="M1364.200 268.7h4" stroke="#b0b0b0" stroke-width="1"/><text x="1361.400" y="254.0" text-anchor="end">5000人</text><path d="M1364.200 250.8h4" stroke="#b0b0b0" stroke-width="1"/><text x="1368.3" y="360.3" text-anchor="middle">一月</text><path d="M1368.3 341.500v4" stroke="#b0b0b0" stroke-width="1"/><text x="1494.3" y="360.3" text-anchor="middle">二月</text><path d="M1494.3 341.500v4" stroke="#b0b0b0" stroke-width="1"/><text x="1620.2" y="360.3" text-anchor="middle">三月</text><path d="M1620.2 341.500v4" stroke="#b0b0b0" stroke-width="1"/><text x="1746.2" y="360.3" text-anchor="middle">四月</text><path d="M1746.2 341.500v4" stroke="#b0b0b0" stroke-width="1"/><text x="1872.2" y="360.3" text-anchor="middle">五月</text><path d="M1872.2 341.500v4" stroke="#b0b0b0" stroke-width="1"/></g><text x="1620.600" y="387.900" text-anchor="middle" font-size="12.400" fill="#404040">月份</text><text transform="translate(1296.300 295.600) rotate(-90)" text-anchor="middle" font-size="12.400" fill="#404040">访问量</text><path d="M1291.6 230.8c1.100 -1 2.100 -0.700 3.100 0.400s2.100 1.300 3.200 0.200" fill="none" stroke="#4e79a7" stroke-width="1.500"/><text x="1307.400" y="235.300" font-size="12.400" fill="#404040">直接访问</text><path d="M1369.0 230.8c1.100 -1 2.100 -0.700 3.100 0.400s2.100 1.300 3.200 0.200" fill="none" stroke="#f28e2c" stroke-width="1.500"/><text x="1384.400" y="235.300" font-size="12.400" fill="#404040">搜索引擎</text></svg></div>
<div class="card" style="left:1275px;top:425px;width:613px;height:288px"><div class="ch"><svg viewBox="0 0 16 12" style="width:16px;height:12px;top:16px"><path fill="none" stroke="#1f5bff" stroke-width="1.100" d="M0.550 0v11.450H16"/><path fill="none" stroke="#1f5bff" stroke-width="1.800" stroke-linejoin="miter" d="M2.900 9.100l3.600-3.900 2.100 2.300 4.600-4.600"/><path fill="#1f5bff" d="M10.700 1.300h4.400v4.400z"/></svg><span style="left:36px">折线图</span></div><div class="ct">北京上海温度趋势上半年对比</div><svg class="abs" style="left:0;top:0" width="613" height="288" viewBox="1275 425 613 288"><path d="M1355 644.6H1872" stroke="#f1f1f1" stroke-width="1" stroke-dasharray="2 4"/><path d="M1355 629.6H1872" stroke="#f1f1f1" stroke-width="1" stroke-dasharray="2 4"/><path d="M1355 614.6H1872" stroke="#f1f1f1" stroke-width="1" stroke-dasharray="2 4"/><path d="M1355 599.6H1872" stroke="#f1f1f1" stroke-width="1" stroke-dasharray="2 4"/><path d="M1355 584.6H1872" stroke="#f1f1f1" stroke-width="1" stroke-dasharray="2 4"/><path d="M1355 569.6H1872" stroke="#f1f1f1" stroke-width="1" stroke-dasharray="2 4"/><path d="M1355 554.6H1872" stroke="#f1f1f1" stroke-width="1" stroke-dasharray="2 4"/><path d="M1398.2 643.6C1426.9 642.5 1455.7 641.3 1484.4 636.7C1513.2 632.1 1541.9 621.9 1570.6 613.9C1599.4 606.0 1628.1 596.2 1656.9 589.0C1685.6 581.8 1714.3 575.9 1743.1 570.7C1771.8 565.5 1800.6 561.7 1829.3 557.8" fill="none" stroke="#4e79a7" stroke-width="1"/><path d="M1398.2 622.6C1426.9 621.8 1455.7 620.9 1484.4 617.5C1513.2 614.1 1541.9 606.6 1570.6 601.0C1599.4 595.4 1628.1 589.4 1656.9 583.9C1685.6 578.5 1714.3 573.2 1743.1 568.3C1771.8 563.5 1800.6 559.1 1829.3 554.8" fill="none" stroke="#f28e2c" stroke-width="1"/><circle cx="1398.2" cy="643.6" r="2.800" fill="#4e79a7"/><circle cx="1484.4" cy="636.7" r="2.800" fill="#4e79a7"/><circle cx="1570.6" cy="613.9" r="2.800" fill="#4e79a7"/><circle cx="1656.9" cy="589.0" r="2.800" fill="#4e79a7"/><circle cx="1743.1" cy="570.7" r="2.800" fill="#4e79a7"/><circle cx="1829.3" cy="557.8" r="2.800" fill="#4e79a7"/><circle cx="1398.2" cy="622.6" r="2.800" fill="#f28e2c"/><circle cx="1484.4" cy="617.5" r="2.800" fill="#f28e2c"/><circle cx="1570.6" cy="601.0" r="2.800" fill="#f28e2c"/><circle cx="1656.9" cy="583.9" r="2.800" fill="#f28e2c"/><circle cx="1743.1" cy="568.3" r="2.800" fill="#f28e2c"/><circle cx="1829.3" cy="554.8" r="2.800" fill="#f28e2c"/><g font-size="12.200" fill="#adadad"><text x="1347.800" y="647.8" text-anchor="end">-5°C</text><path d="M1351 644.6h4" stroke="#b0b0b0" stroke-width="1"/><text x="1347.800" y="632.8" text-anchor="end">0°C</text><path d="M1351 629.6h4" stroke="#b0b0b0" stroke-width="1"/><text x="1347.800" y="617.8" text-anchor="end">5°C</text><path d="M1351 614.6h4" stroke="#b0b0b0" stroke-width="1"/><text x="1347.800" y="602.8" text-anchor="end">10°C</text><path d="M1351 599.6h4" stroke="#b0b0b0" stroke-width="1"/><text x="1347.800" y="587.8" text-anchor="end">15°C</text><path d="M1351 584.6h4" stroke="#b0b0b0" stroke-width="1"/><text x="1347.800" y="572.8" text-anchor="end">20°C</text><path d="M1351 569.6h4" stroke="#b0b0b0" stroke-width="1"/><text x="1347.800" y="557.8" text-anchor="end">25°C</text><path d="M1351 554.6h4" stroke="#b0b0b0" stroke-width="1"/><text x="1398.2" y="664.3" text-anchor="middle">一月</text><path d="M1398.2 646.300v3.500" stroke="#b0b0b0" stroke-width="1"/><text x="1484.4" y="664.3" text-anchor="middle">二月</text><path d="M1484.4 646.300v3.500" stroke="#b0b0b0" stroke-width="1"/><text x="1570.6" y="664.3" text-anchor="middle">三月</text><path d="M1570.6 646.300v3.500" stroke="#b0b0b0" stroke-width="1"/><text x="1656.9" y="664.3" text-anchor="middle">四月</text><path d="M1656.9 646.300v3.500" stroke="#b0b0b0" stroke-width="1"/><text x="1743.1" y="664.3" text-anchor="middle">五月</text><path d="M1743.1 646.300v3.500" stroke="#b0b0b0" stroke-width="1"/><text x="1829.3" y="664.3" text-anchor="middle">六月</text><path d="M1829.3 646.300v3.500" stroke="#b0b0b0" stroke-width="1"/></g><text x="1614" y="691.900" text-anchor="middle" font-size="12.400" fill="#404040">月份</text><text transform="translate(1296.300 599.600) rotate(-90)" text-anchor="middle" font-size="12.400" fill="#404040">温度</text><path d="M1291.6 534.8c1.100 -1 2.100 -0.700 3.100 0.400s2.100 1.300 3.200 0.200" fill="none" stroke="#4e79a7" stroke-width="1.500"/><text x="1307.400" y="539.300" font-size="12.400" fill="#404040">北京</text><path d="M1345.0 534.8c1.100 -1 2.100 -0.700 3.100 0.400s2.100 1.300 3.200 0.200" fill="none" stroke="#f28e2c" stroke-width="1.500"/><text x="1360.700" y="539.300" font-size="12.400" fill="#404040">上海</text></svg></div>
<div class="card" style="left:1275px;top:729px;width:613px;height:288px"><div class="ch"><svg viewBox="0 0 14 14" style="left:12px;top:15.500px;width:13px;height:13px"><circle cx="7" cy="7" r="5.600" fill="none" stroke="#1f5bff" stroke-width="1.700"/><circle cx="7" cy="7" r="2.300" fill="#1f5bff"/></svg><span style="left:32px">散点图</span></div><div class="ct">身高体重分布散点图</div><svg class="abs" style="left:0;top:0" width="613" height="288" viewBox="1275 729 613 288"><path d="M1348.7 858V1000" stroke="#f1f1f1" stroke-width="1" stroke-dasharray="2 4"/><path d="M1423.5 858V1000" stroke="#f1f1f1" stroke-width="1" stroke-dasharray="2 4"/><path d="M1498.3 858V1000" stroke="#f1f1f1" stroke-width="1" stroke-dasharray="2 4"/><path d="M1573.1 858V1000" stroke="#f1f1f1" stroke-width="1" stroke-dasharray="2 4"/><path d="M1647.9 858V1000" stroke="#f1f1f1" stroke-width="1" stroke-dasharray="2 4"/><path d="M1722.7 858V1000" stroke="#f1f1f1" stroke-width="1" stroke-dasharray="2 4"/><path d="M1797.5 858V1000" stroke="#f1f1f1" stroke-width="1" stroke-dasharray="2 4"/><path d="M1872.3 858V1000" stroke="#f1f1f1" stroke-width="1" stroke-dasharray="2 4"/><path d="M1348.700 859.3H1872" stroke="#f1f1f1" stroke-width="1" stroke-dasharray="2 4"/><path d="M1348.700 874.1H1872" stroke="#f1f1f1" stroke-width="1" stroke-dasharray="2 4"/><path d="M1348.700 888.9H1872" stroke="#f1f1f1" stroke-width="1" stroke-dasharray="2 4"/><g font-size="12.200" fill="#adadad"><text x="1342" y="862.5" text-anchor="end">100</text><path d="M1345 859.3h4" stroke="#b0b0b0" stroke-width="1"/><text x="1342" y="877.3" text-anchor="end">90</text><path d="M1345 874.1h4" stroke="#b0b0b0" stroke-width="1"/><text x="1342" y="892.1" text-anchor="end">80</text><path d="M1345 888.9h4" stroke="#b0b0b0" stroke-width="1"/></g><circle cx="1864.3" cy="861.6" r="3.200" fill="none" stroke="#4e79a7" stroke-width="1.100" stroke-opacity="0.850"/><circle cx="1767.4" cy="872.6" r="3.200" fill="none" stroke="#4e79a7" stroke-width="1.100" stroke-opacity="0.850"/><circle cx="1709" cy="875.4" r="3.200" fill="none" stroke="#4e79a7" stroke-width="1.100" stroke-opacity="0.850"/><circle cx="1689.7" cy="883.4" r="3.200" fill="none" stroke="#4e79a7" stroke-width="1.100" stroke-opacity="0.850"/><circle cx="1726.8" cy="883.2" r="3.200" fill="none" stroke="#4e79a7" stroke-width="1.100" stroke-opacity="0.850"/><circle cx="1674" cy="885.2" r="3.200" fill="none" stroke="#4e79a7" stroke-width="1.100" stroke-opacity="0.850"/><circle cx="1294.700" cy="838.600" r="3.400" fill="none" stroke="#4e79a7" stroke-width="1" stroke-opacity=".8"/><text x="1307.400" y="842.900" font-size="12.400" fill="#404040">男</text><circle cx="1335.600" cy="838.600" r="3.400" fill="none" stroke="#f28e2c" stroke-width="1" stroke-opacity=".8"/><text x="1348.300" y="842.900" font-size="12.400" fill="#404040">女</text><text transform="translate(1296.300 894) rotate(-90)" text-anchor="middle" font-size="12.400" fill="#404040">体重</text></svg></div>
</div>
<div id="rstrip"><div class="abs" style="left:5px;top:194px;width:7px;height:60px;border-radius:4px;background:#eef0f3"></div><div class="abs" style="left:5px;top:219px;width:7px;height:35px;border-radius:4px;background:linear-gradient(180deg,#12d39a,#14a6f3)"></div></div>
<div id="hdr">
<svg class="abs" style="left:16px;top:10px;width:40px;height:40px" viewBox="0 0 911 911"><path fill="#3463a8" d="M770 380C720 250 610 155 470 155C300 155 170 290 170 460C170 640 300 770 470 770C620 770 745 680 748 545C750 465 690 395 600 395C545 395 500 425 503 468C506 500 545 512 575 492C585 484 583 465 565 458C610 440 670 470 680 530C688 600 620 655 545 650C440 645 370 560 372 465C375 350 460 265 560 262C660 260 730 320 770 380Z"/></svg>
<div id="brand">Gadmin V9.0</div>
<div class="nav" style="left:554px;width:80px"><svg style="top:4.700px" viewBox="0 0 24 24" fill="none" stroke="#fff" stroke-width="1.6" stroke-linecap="round"><path d="M2.6 17.2A9.6 9.6 0 1 1 21.4 17.2"/><path d="M2.2 20.6h19.6"/><path d="M11.2 14.6l4.2-4.6" stroke-width="1.9"/></svg><span>工作台</span></div>
<div class="nav" style="left:635px;width:80px"><svg viewBox="0 0 24 24" fill="none" stroke="#fff" stroke-width="1.9" stroke-linecap="round"><path d="M12 3.6v16.8M4.7 7.8l14.6 8.4M4.7 16.2l14.6-8.4"/><path d="M9.8 4.2L12 6.4l2.2-2.2M9.8 19.8l2.2-2.2 2.2 2.2M4 10.6l3-.8-.8-3M20 13.4l-3 .8.8 3M4 13.4l3 .8-.8 3M20 10.6l-3-.8.8-3" stroke-width="1.5"/></svg><span>测试</span></div>
<div class="nav" style="left:716px;width:80px"><svg viewBox="0 0 24 24" fill="none" stroke="#fff" stroke-width="1.9" stroke-linecap="round"><path d="M12 3.6v16.8M4.7 7.8l14.6 8.4M4.7 16.2l14.6-8.4"/><path d="M9.8 4.2L12 6.4l2.2-2.2M9.8 19.8l2.2-2.2 2.2 2.2M4 10.6l3-.8-.8-3M20 13.4l-3 .8.8 3M4 13.4l3 .8-.8 3M20 10.6l-3-.8.8-3" stroke-width="1.5"/></svg><span>测试2</span></div>
<div class="nav" style="left:797px;width:80px"><svg viewBox="0 0 24 24" fill="none" stroke="#fff" stroke-width="1.6" stroke-linecap="round"><circle cx="12" cy="11.4" r="9.6"/><path d="M7.6 13.6c1 2.2 2.6 3.2 4.4 3.2s3.4-1 4.4-3.2"/><circle cx="8.6" cy="8.6" r="1.1" fill="#fff" stroke="none"/><circle cx="15.4" cy="8.6" r="1.1" fill="#fff" stroke="none"/></svg><span>演示内容</span></div>
<div class="nav" style="left:878px;width:80px"><svg viewBox="0 0 24 24"><circle cx="11.6" cy="11.5" r="10.2" fill="#fff"/><path d="M15.6 6.2l-2.2 6.6-5.2 4.6 2.2-6.6z" fill="#0d6efd"/><circle cx="11.8" cy="11.8" r="1.1" fill="#fff"/></svg><span>测试3</span></div>
<div class="nav" style="left:959px;width:80px"><svg viewBox="0 0 24 24" fill="none" stroke="#fff" stroke-width="1.3"><path d="M8.4 5.2H4.2v14.6h16V5.2H16" /><path d="M8.8 6.8l1-3.4h4.8l1 3.4z"/><path d="M7.6 10.4h9.2M7.6 13h9.2M7.6 15.6h6" stroke-width="1.2"/></svg><span>基础数据</span></div>
<div class="nav" style="left:1040px;width:80px"><svg viewBox="0 0 24 24" fill="none" stroke="#fff" stroke-width="1.7"><rect x="3.4" y="4" width="6.4" height="6.4"/><rect x="3.4" y="13.6" width="6.4" height="6.4"/><rect x="13.2" y="13.6" width="6.4" height="6.4"/><path d="M16.6 2.6l4.2 4.4-4.2 4.4-4.2-4.4z" fill="#fff" stroke="none"/></svg><span>企业中枢</span></div>
<div class="nav" style="left:1125px;width:80px"><svg viewBox="0 0 24 24" fill="none" stroke="#fff" stroke-width="1.7" stroke-linecap="round" stroke-linejoin="round"><path d="M6.4 7L2 11.8l4.400 4.800M17.6 7l4.400 4.800L17.600 16.600M14 6l-4 11.6"/></svg><span>开发平台</span></div>
<svg class="abs" style="left:1637.500px;top:20.500px;width:21px;height:21px" viewBox="0 0 24 24"><path fill="#fff" stroke="#fff" stroke-width="0.700" d="M17.65 6.35A7.95 7.95 0 0 0 12 4a8 8 0 1 0 7.730 10h-2.080A6 6 0 1 1 12 6c1.660 0 3.140.69 4.220 1.780L13 11h7V4z"/></svg>
<svg class="abs" style="left:1684px;top:21.500px;width:20px;height:19px" viewBox="0 0 24 24" preserveAspectRatio="none" fill="none" stroke="#fff" stroke-width="2" stroke-linejoin="round"><path d="M6 17V11a6 6 0 0 1 12 0v6l1.500 1.500h-15z"/><path d="M10 20.500a2 2 0 0 0 4 0" stroke-linecap="round"/><path d="M12 3.200v1.500" stroke-linecap="round"/></svg>
<div class="abs" style="left:1699px;top:11px;width:26px;height:18px;background:#fa541c;border-radius:2px;font-size:12.5px;line-height:18px;text-align:center;color:#fff">39</div>
<svg class="abs" style="left:1733px;top:23px;width:15px;height:15px" viewBox="0 0 24 24" fill="none" stroke="#e6efff" stroke-width="2" stroke-linecap="round" stroke-linejoin="round"><path d="M3 8.500V3h5.500M3 3l6.500 6.500M21 8.500V3h-5.500M21 3l-6.500 6.500M3 15.500V21h5.500M3 21l6.500-6.500M21 15.500V21h-5.500M21 21l-6.500-6.500"/></svg>
<div class="abs" style="left:1769px;top:10px;width:35px;height:35px;border-radius:50%;background:#0c4bac;font-size:20px;line-height:34px;text-align:center;color:#fff">流</div>
<div class="abs" style="left:1809px;top:10.5px;font-size:16px;line-height:20px;white-space:nowrap;font-weight:500">流之云</div>
<div class="abs" style="left:1809px;top:30.5px;font-size:16px;line-height:20px;white-space:nowrap;font-weight:500">系统管理员</div>
</div>
<div id="tabs">
<svg class="abs" style="left:17px;top:15px;width:17px;height:15px" viewBox="0 0 17 15" fill="none" stroke="#4d8bf5" stroke-width="1.6" stroke-linecap="round" stroke-linejoin="round"><path d="M8 1.500L2 7.500l6 6M14.500 1.500l-6 6 6 6"/></svg>
<div class="abs" style="left:50px;top:5px;width:64px;height:40px;border:2px solid #a9c8fb;border-bottom:none;border-radius:5px 5px 0 0;background:#fff"></div>
<svg class="abs" style="left:59.500px;top:19.500px;width:15px;height:15px" viewBox="0 0 15 15" fill="none" stroke="#3f85f7" stroke-width="1.9" stroke-linejoin="round"><path d="M1.700 6.600L7.500 1.600l5.800 5v6.800H1.700z"/><path d="M7.500 8.600v2.400" stroke-linecap="round"/></svg>
<div class="tab" style="left:77px;color:#3f85f7;font-weight:700;top:3px">首页</div>
<div class="tab" style="left:138px">业务设计</div>
<svg class="abs" style="left:208px;top:20px;width:9px;height:9px" viewBox="0 0 9 9" stroke="#888" stroke-width="1"><path d="M1 1l7 7M8 1l-7 7"/></svg>
<div class="tab" style="left:248px">订单管理</div>
<svg class="abs" style="left:318px;top:20px;width:9px;height:9px" viewBox="0 0 9 9" stroke="#888" stroke-width="1"><path d="M1 1l7 7M8 1l-7 7"/></svg>
<svg class="abs" style="left:1881px;top:15px;width:17px;height:15px" viewBox="0 0 17 15" fill="none" stroke="#4d8bf5" stroke-width="1.6" stroke-linecap="round" stroke-linejoin="round"><path d="M2.500 1.500l6 6-6 6M9 1.500l6 6-6 6"/></svg>
</div>
<div id="foot">Gadmin V9.0 [当前系统版本：9.0.6]</div>
<div class="abs" style="left:1850px;top:892.500px;font-size:16px;font-style:italic;color:#2593c6;line-height:20px;white-space:nowrap">cojz8.com</div>
<div id="wmk"><div class="wm" style="left:40.9px;top:53.1px">Id:12026-01-12gadmin</div><div class="wm" style="left:40.9px;top:182.6px">Id:12026-01-12gadmin</div><div class="wm" style="left:40.9px;top:312.1px">Id:12026-01-12gadmin</div><div class="wm" style="left:40.9px;top:441.6px">Id:12026-01-12gadmin</div><div class="wm" style="left:40.9px;top:571.1px">Id:12026-01-12gadmin</div><div class="wm" style="left:373.2px;top:53.1px">Id:12026-01-12gadmin</div><div class="wm" style="left:373.2px;top:182.6px">Id:12026-01-12gadmin</div><div class="wm" style="left:373.2px;top:312.1px">Id:12026-01-12gadmin</div><div class="wm" style="left:373.2px;top:441.6px">Id:12026-01-12gadmin</div><div class="wm" style="left:373.2px;top:571.1px">Id:12026-01-12gadmin</div><div class="wm" style="left:705.5px;top:53.1px">Id:12026-01-12gadmin</div><div class="wm" style="left:705.5px;top:182.6px">Id:12026-01-12gadmin</div><div class="wm" style="left:705.5px;top:312.1px">Id:12026-01-12gadmin</div><div class="wm" style="left:705.5px;top:441.6px">Id:12026-01-12gadmin</div><div class="wm" style="left:705.5px;top:571.1px">Id:12026-01-12gadmin</div><div class="wm" style="left:1037.8px;top:53.1px">Id:12026-01-12gadmin</div><div class="wm" style="left:1037.8px;top:182.6px">Id:12026-01-12gadmin</div><div class="wm" style="left:1037.8px;top:312.1px">Id:12026-01-12gadmin</div><div class="wm" style="left:1037.8px;top:441.6px">Id:12026-01-12gadmin</div><div class="wm" style="left:1037.8px;top:571.1px">Id:12026-01-12gadmin</div><div class="wm" style="left:1370.1px;top:53.1px">Id:12026-01-12gadmin</div><div class="wm" style="left:1370.1px;top:182.6px">Id:12026-01-12gadmin</div><div class="wm" style="left:1370.1px;top:312.1px">Id:12026-01-12gadmin</div><div class="wm" style="left:1370.1px;top:441.6px">Id:12026-01-12gadmin</div><div class="wm" style="left:1370.1px;top:571.1px">Id:12026-01-12gadmin</div><div class="wm" style="left:1702.4px;top:53.1px">Id:12026-01-12gadmin</div><div class="wm" style="left:1702.4px;top:182.6px">Id:12026-01-12gadmin</div><div class="wm" style="left:1702.4px;top:312.1px">Id:12026-01-12gadmin</div><div class="wm" style="left:1702.4px;top:441.6px">Id:12026-01-12gadmin</div><div class="wm" style="left:1702.4px;top:571.1px">Id:12026-01-12gadmin</div></div>
</body>
</html>
